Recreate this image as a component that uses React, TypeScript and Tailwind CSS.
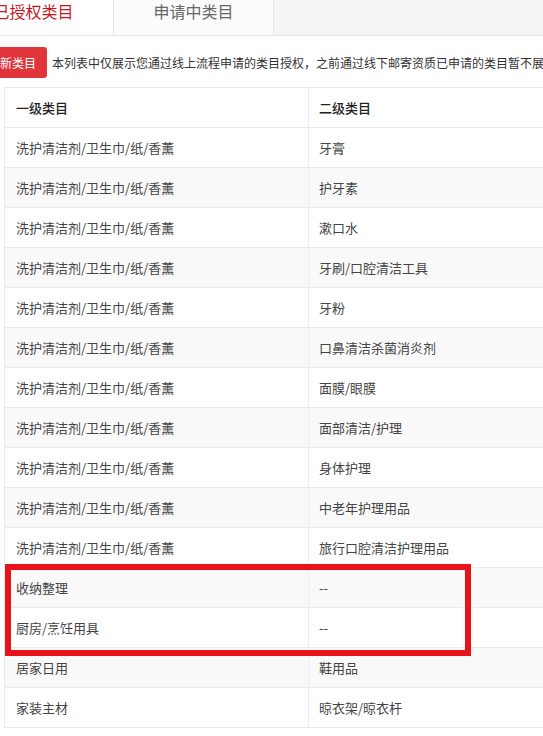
const FONT = { fontFamily: '"Noto Sans CJK SC", "Noto Sans", sans-serif' };

const ROWS = [
  ['洗护清洁剂/卫生巾/纸/香薰', '牙膏'],
  ['洗护清洁剂/卫生巾/纸/香薰', '护牙素'],
  ['洗护清洁剂/卫生巾/纸/香薰', '漱口水'],
  ['洗护清洁剂/卫生巾/纸/香薰', '牙刷/口腔清洁工具'],
  ['洗护清洁剂/卫生巾/纸/香薰', '牙粉'],
  ['洗护清洁剂/卫生巾/纸/香薰', '口鼻清洁杀菌消炎剂'],
  ['洗护清洁剂/卫生巾/纸/香薰', '面膜/眼膜'],
  ['洗护清洁剂/卫生巾/纸/香薰', '面部清洁/护理'],
  ['洗护清洁剂/卫生巾/纸/香薰', '身体护理'],
  ['洗护清洁剂/卫生巾/纸/香薰', '中老年护理用品'],
  ['洗护清洁剂/卫生巾/纸/香薰', '旅行口腔清洁护理用品'],
  ['收纳整理', '--'],
  ['厨房/烹饪用具', '--'],
  ['居家日用', '鞋用品'],
  ['家装主材', '晾衣架/晾衣杆'],
];

function Row({ a, b, striped }: { a: string; b: string; striped: boolean }) {
  return (
    <div className={`flex h-[40px] border-b border-[#ebebeb] ${striped ? 'bg-[#f9f9f9]' : 'bg-white'}`}>
      <div className="flex w-[304px] shrink-0 items-center border-r border-[#ececec] pl-[11px]">{a}</div>
      <div className="flex flex-1 items-center pl-[10px]">{b}</div>
    </div>
  );
}

export default function App() {
  return (
    <div className="relative h-[736px] w-[543px] overflow-hidden bg-white" style={FONT}>
      {/* Tabs */}
      <div className="flex h-[36px] border-b border-[#e6e6e6] bg-[#f5f5f5]">
        <div className="-ml-[46px] flex h-full w-[160px] shrink-0 justify-center border-r border-[#e8e8e8] bg-white text-[16px] leading-[22px] text-[#c8161e]">
          已授权类目
        </div>
        <div className="flex h-full w-[160px] shrink-0 justify-center border-r border-[#e8e8e8] bg-[#fbfbfb] text-[16px] leading-[22px] text-[#666]">
          申请中类目
        </div>
      </div>

      {/* Action line */}
      <div className="mt-[11px] flex items-center gap-[5px] whitespace-nowrap">
        <button className="-ml-[35px] h-[31px] shrink-0 rounded-[3px] bg-[#e0363b] px-[11px] text-[12px] text-white">
          添加新类目
        </button>
        <span className="text-[12px] text-[#333]">
          本列表中仅展示您通过线上流程申请的类目授权，之前通过线下邮寄资质已申请的类目暂不展示
        </span>
      </div>

      {/* Table */}
      <div className="ml-[4px] mt-[9px] w-[760px] border-l border-t border-[#ebebeb] text-[13px] text-[#444]">
        <div className="flex h-[40px] border-b border-[#ebebeb] bg-white font-medium text-[#222]">
          <div className="flex w-[304px] shrink-0 items-center border-r border-[#ececec] pl-[11px]">一级类目</div>
          <div className="flex flex-1 items-center pl-[10px]">二级类目</div>
        </div>
        {ROWS.map(([a, b], i) => (
          <Row key={i} a={a} b={b} striped={i % 2 === 1} />
        ))}
      </div>

      {/* Highlight box */}
      <div className="absolute left-[5px] top-[564px] h-[92px] w-[466px] border-[6px] border-[#e8121b]" />
    </div>
  );
}
